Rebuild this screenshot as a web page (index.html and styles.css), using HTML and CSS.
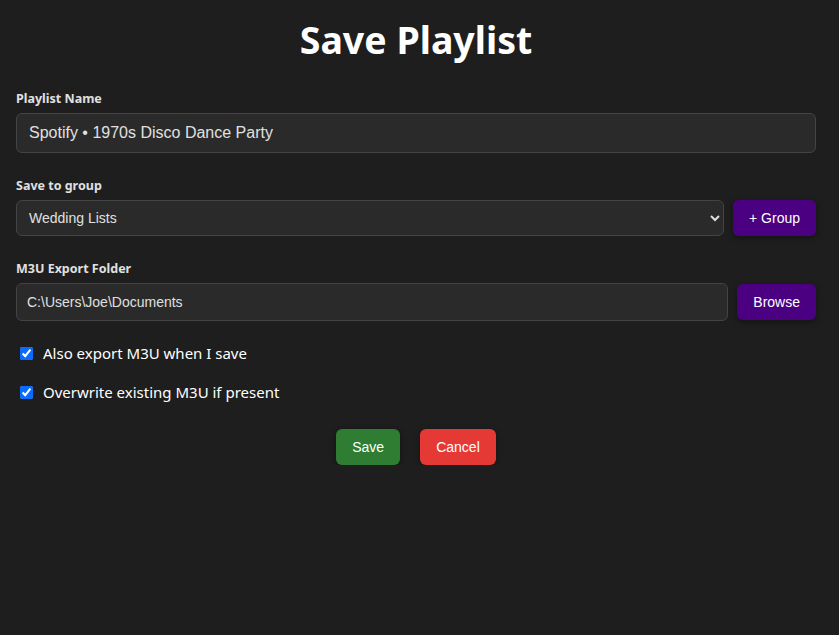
FILE: index.html
```html
<!DOCTYPE html>
<html lang="en">
<head>
    <meta charset="UTF-8">
    <meta name="viewport" content="width=device-width, initial-scale=1.0">
    <title>Save Playlist</title>
    <link rel="stylesheet" href="styles.css">
</head>
<body>
    <div class="dialog">
        <h1>Save Playlist</h1>

        <!-- playlist name -->
        <div class="field">
            <label for="name">Playlist Name</label>
            <input type="text" id="name" class="text-input big" value="Spotify • 1970s Disco Dance Party">
        </div>

        <!-- group -->
        <div class="field">
            <label for="group">Save to group</label>
            <div class="row">
                <select id="group">
                    <option>Wedding Lists</option>
                </select>
                <button class="btn purple">+ Group</button>
            </div>
        </div>

        <!-- export folder -->
        <div class="field">
            <label for="folder">M3U Export Folder</label>
            <div class="row">
                <input type="text" id="folder" class="text-input" value="C:\Users\Joe\Documents">
                <button class="btn purple">Browse</button>
            </div>
        </div>

        <label class="check"><input type="checkbox" checked> Also export M3U when I save</label>
        <label class="check"><input type="checkbox" checked> Overwrite existing M3U if present</label>

        <div class="actions">
            <button class="btn green">Save</button>
            <button class="btn red">Cancel</button>
        </div>
    </div>
</body>
</html>
```

FILE: styles.css
```css
* {
    margin: 0;
    padding: 0;
    box-sizing: border-box;
}

body {
    font-family: "Noto Sans", "Open Sans", sans-serif;
    background: #1e1e1e;
    color: #fff;
}

.dialog {
    width: 832px;
    padding: 0 16px;
}

h1 {
    font-size: 37.5px;
    font-weight: 700;
    text-align: center;
    line-height: 46px;
    padding-top: 17px;
    margin-bottom: 27px;
}

.field {
    margin-bottom: 22px;
}

.field + .field {
    margin-top: 24px;
}

.field label {
    display: block;
    font-size: 12.5px;
    font-weight: 700;
    color: #e0e0e0;
    margin-bottom: 6px;
}

.text-input, select {
    font-family: "Liberation Sans", Arial, sans-serif;
    background: #2a2a2a;
    color: #e0e0e0;
    border: 1px solid #444;
    border-radius: 6px;
    outline: none;
}

.text-input {
    width: 100%;
    height: 38px;
    padding: 0 10px;
    font-size: 14px;
}

.text-input.big {
    height: 40px;
    padding: 0 12px;
    font-size: 16px;
}

select {
    flex: 1;
    height: 36px;
    padding: 0 8px;
    font-size: 14px;
}

.row {
    display: flex;
    align-items: center;
    gap: 9px;
}

.btn {
    font-family: "Liberation Sans", Arial, sans-serif;
    font-size: 14px;
    color: #fff;
    border: none;
    border-radius: 6px;
    padding: 0 16px;
    height: 36px;
    cursor: pointer;
    box-shadow: 0 2px 6px rgba(0, 0, 0, 0.4);
    white-space: nowrap;
}

.purple {
    background: #4b0082;
}

.green {
    background: #2e7d32;
}

.red {
    background: #e53935;
}

.check {
    display: flex;
    align-items: center;
    gap: 10px;
    font-size: 15px;
    margin: 0 0 19px 4px;
}

.check input {
    width: 13px;
    height: 13px;
    accent-color: #0a6cff;
}

.actions {
    display: flex;
    justify-content: center;
    gap: 20px;
    margin-top: 27px;
}
```
